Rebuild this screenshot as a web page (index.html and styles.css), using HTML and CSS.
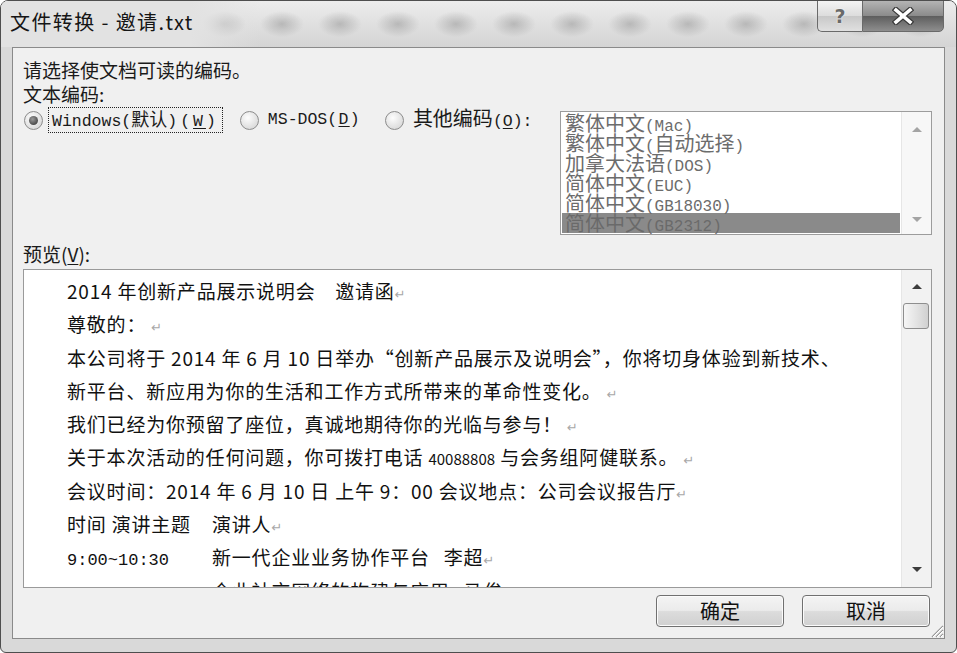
FILE: index.html
```html
<!DOCTYPE html>
<html lang="zh-CN">
<head>
  <meta charset="UTF-8" />
  <meta name="viewport" content="width=device-width, initial-scale=1.0"/>
  <title>文件转换 - 邀请.txt</title>
  <link rel="stylesheet" href="styles.css">
</head>
<body>
  <div class="window">
    <div class="titlebar">
      <div class="title">文件转换 - 邀请.txt</div>
      <div class="caption-buttons">
        <div class="cap-btn help">?</div>
        <div class="cap-btn close">
          <svg width="22" height="18" viewBox="0 0 22 18">
            <path d="M4 3 L18 15 M18 3 L4 15" stroke="#3a3a3a" stroke-width="6" stroke-linecap="square"/>
            <path d="M4 3 L18 15 M18 3 L4 15" stroke="#fff" stroke-width="3.6" stroke-linecap="square"/>
          </svg>
        </div>
      </div>
    </div>

    <div class="client">
      <p class="line">请选择使文档可读的编码。</p>
      <p class="line">文本编码:</p>

      <div class="encoding-row">
        <div class="radios">
          <div class="radio checked">
            <span class="circle"></span>
            <span class="radio-text focus">Windows(<span class="cjk-s">默认</span>)<span class="acc">(<u>W</u>)</span></span>
          </div>
          <div class="radio">
            <span class="circle"></span>
            <span class="radio-text">MS-DOS<span class="acc-s">(<u>D</u>)</span></span>
          </div>
          <div class="radio other">
            <span class="circle"></span>
            <span class="radio-text"><span class="cjk">其他编码</span>(<u>O</u>):</span>
          </div>
        </div>

        <div class="listbox">
          <ul class="list-items">
            <li>繁体中文<span class="lat">(Mac)</span></li>
            <li>繁体中文<span class="lat">(</span>自动选择<span class="lat">)</span></li>
            <li>加拿大法语<span class="lat">(DOS)</span></li>
            <li>简体中文<span class="lat">(EUC)</span></li>
            <li>简体中文<span class="lat">(GB18030)</span></li>
            <li class="selected">简体中文<span class="lat">(GB2312)</span></li>
          </ul>
          <div class="scrollbar list-sb">
            <div class="sb-btn"><span class="arrow up"></span></div>
            <div class="sb-btn"><span class="arrow down"></span></div>
          </div>
        </div>
      </div>

      <p class="line preview-label">预览(<u>V</u>):</p>

      <div class="preview">
        <div class="doc">
          <div class="row">2014 年创新产品展示说明会　邀请函<span class="mark">↵</span></div>
          <div class="row">尊敬的： <span class="mark">↵</span></div>
          <div class="row">本公司将于 2014 年 6 月 10 日举办“创新产品展示及说明会”，你将切身体验到新技术、</div>
          <div class="row">新平台、新应用为你的生活和工作方式所带来的革命性变化。 <span class="mark">↵</span></div>
          <div class="row">我们已经为你预留了座位，真诚地期待你的光临与参与！ <span class="mark">↵</span></div>
          <div class="row">关于本次活动的任何问题，你可拨打电话 <span class="small">40088808</span> 与会务组阿健联系。 <span class="mark">↵</span></div>
          <div class="row">会议时间：2014 年 6 月 10 日 上午 9：00 会议地点：公司会议报告厅<span class="mark">↵</span></div>
          <div class="row"><span class="col">时间 演讲主题</span>演讲人<span class="mark">↵</span></div>
          <div class="row"><span class="col time">9:00~10:30</span>新一代企业业务协作平台<span class="name">李超</span><span class="mark">↵</span></div>
          <div class="row"><span class="col time">10:30~12:00</span>企业社交网络的构建与应用<span class="name">马俊</span><span class="mark">↵</span></div>
        </div>
        <div class="scrollbar doc-sb">
          <div class="sb-btn top"><span class="arrow up"></span></div>
          <div class="thumb"></div>
          <div class="sb-track"></div>
          <div class="sb-btn bottom"><span class="arrow down"></span></div>
        </div>
      </div>

      <div class="actions">
        <button class="btn">确定</button>
        <button class="btn">取消</button>
      </div>

      <svg class="grip" width="14" height="14" viewBox="0 0 14 14">
        <path d="M13 2 L2 13 M13 6 L6 13 M13 10 L10 13" stroke="#9a9a9a" stroke-width="1.4"/>
        <path d="M13 3 L3 13 M13 7 L7 13 M13 11 L11 13" stroke="#fff" stroke-width="1"/>
      </svg>
    </div>
  </div>
</body>
</html>
```

FILE: styles.css
```css
* {
  box-sizing: border-box;
}

body {
  margin: 0;
  font-family: "Noto Sans CJK SC", sans-serif;
  color: #1a1a1a;
  background: #fff;
}

p {
  margin: 0;
}

u {
  text-decoration: underline;
  text-underline-offset: 2px;
}

.window {
  width: 957px;
  height: 653px;
  border: 1px solid #4e4e4e;
  border-radius: 8px 8px 6px 6px;
  background: #d9d9d9;
  overflow: hidden;
}

/* title bar with the blurred glass look */
.titlebar {
  height: 46px;
  display: flex;
  align-items: flex-start;
  padding: 0 12px 0 9px;
  background:
    linear-gradient(to right, #e2e2e2 0, #e2e2e2 190px, rgba(226,226,226,0) 260px),
    radial-gradient(22px 13px at 50% 50%, rgba(110,110,110,0.35), rgba(110,110,110,0)) 20px 6px / 58px 34px repeat-x,
    linear-gradient(#ececec, #d4d4d4);
}

.title {
  margin-top: 9px;
  font-size: 20px;
  line-height: 24px;
  letter-spacing: 1.4px;
  color: #151515;
}

.caption-buttons {
  margin-left: auto;
  display: flex;
  margin-top: -1px;
}

.cap-btn {
  height: 32px;
  display: flex;
  align-items: center;
  justify-content: center;
  border: 1px solid #6a6a6a;
}

.help {
  width: 45px;
  border-right: none;
  border-radius: 0 0 0 5px;
  background: linear-gradient(#f4f4f4, #dcdcdc 50%, #c8c8c8 51%, #e0e0e0);
  font-family: "DejaVu Sans", sans-serif;
  font-weight: bold;
  font-size: 19px;
  color: #6a6a6a;
  text-shadow: 0 0 2px #fff;
}

.close {
  width: 82px;
  border-radius: 0 0 5px 0;
  background: linear-gradient(#b4b4b4, #8a8a8a 50%, #5e5e5e 51%, #8e8e8e);
}

/* client area */
.client {
  position: relative;
  height: 592px;
  margin: 0 11px;
  padding: 10px 12px 0 10px;
  border: 1px solid #8a8a8a;
  background: #f0f0f0;
}

.line {
  font-size: 19px;
  line-height: 24px;
}

.encoding-row {
  display: flex;
  align-items: flex-start;
}

.radios {
  display: flex;
  align-items: center;
  height: 24px;
  margin-top: 2px;
  gap: 18px;
  padding-left: 1px;
}

.radio {
  display: flex;
  align-items: center;
  gap: 6px;
}

.radio.other {
  margin-left: 3px;
}

.circle {
  width: 19px;
  height: 19px;
  border-radius: 50%;
  border: 1px solid #8c8c8c;
  background: radial-gradient(circle at 40% 35%, #fdfdfd, #d0d0d0);
  display: flex;
  align-items: center;
  justify-content: center;
}

.checked .circle::after {
  content: "";
  width: 9px;
  height: 9px;
  border-radius: 50%;
  background: radial-gradient(circle at 40% 35%, #9a9a9a, #2c2c2c);
}

.radio-text {
  font-family: "Liberation Mono", "Noto Sans CJK SC", monospace;
  font-size: 16.5px;
  line-height: 20px;
  padding: 0 3px;
  color: #1a1a1a;
}

.radio-text .cjk {
  font-family: "Noto Sans CJK SC", sans-serif;
  font-size: 20px;
}

.radio-text .cjk-s {
  font-family: "Noto Sans CJK SC", sans-serif;
  font-size: 18px;
}

.radio-text .acc {
  letter-spacing: 3px;
  padding-left: 3px;
}

.radio-text .acc-s {
  letter-spacing: 1.3px;
}

.focus {
  outline: 1px dotted #222;
  outline-offset: 0;
}

.listbox {
  margin-left: auto;
  margin-top: 5px;
  width: 372px;
  height: 124px;
  border: 1px solid #9c9c9c;
  background: #fff;
  display: flex;
}

.list-items {
  flex: 1;
  margin: 0;
  padding: 1px 1px 0 1px;
  list-style: none;
  overflow: hidden;
}

.list-items li {
  height: 20px;
  line-height: 20px;
  font-size: 20px;
  padding-left: 3px;
  color: #6c6c6c;
  white-space: nowrap;
}

.list-items .lat {
  font-family: "Liberation Mono", monospace;
  font-size: 16px;
}

.list-items .selected {
  background: #8a8a8a;
  color: #6a6a6a;
}

.scrollbar {
  width: 30px;
  display: flex;
  flex-direction: column;
  background: #f2f2f2;
  border-left: 1px solid #e6e6e6;
}

.list-sb {
  justify-content: space-between;
  padding: 8px 0 6px;
  background: #f7f7f7;
}

.sb-btn {
  height: 18px;
  display: flex;
  align-items: center;
  justify-content: center;
}

.arrow {
  width: 0;
  height: 0;
  border-left: 5px solid transparent;
  border-right: 5px solid transparent;
}

.arrow.up {
  border-bottom: 5px solid #3c3c3c;
}

.arrow.down {
  border-top: 5px solid #3c3c3c;
}

.list-sb .arrow.up {
  border-bottom-color: #a4a4a4;
}

.list-sb .arrow.down {
  border-top-color: #a4a4a4;
}

.preview-label {
  margin-top: 7px;
}

.preview {
  margin-top: 3px;
  height: 319px;
  border: 1px solid #9a9a9a;
  background: #fff;
  display: flex;
}

.doc {
  flex: 1;
  overflow: hidden;
  padding: 4px 0 0 43px;
  font-size: 19px;
  letter-spacing: 0.8px;
  color: #111;
}

.doc .row {
  height: 33.3px;
  line-height: 33.3px;
  white-space: pre;
}

.doc .mark {
  font-family: "DejaVu Sans", sans-serif;
  font-size: 13px;
  color: #a8a8a8;
}

.doc .small {
  font-size: 15px;
  letter-spacing: 0;
}

.doc .col {
  display: inline-block;
  width: 145px;
}

.doc .time {
  font-family: "Liberation Mono", monospace;
  font-size: 17px;
  letter-spacing: 0;
}

.doc .name {
  margin-left: 14px;
}

.doc-sb .top {
  height: 33px;
}

.doc-sb .bottom {
  height: 36px;
}

.thumb {
  height: 26px;
  margin: 0 2px 0 1px;
  border: 1px solid #8e8e8e;
  border-radius: 3px;
  background: linear-gradient(to right, #f6f6f6, #e2e2e2 55%, #d0d0d0);
}

.sb-track {
  flex: 1;
}

.actions {
  display: flex;
  justify-content: flex-end;
  gap: 18px;
  margin-top: 7px;
  padding-right: 2px;
}

.btn {
  width: 128px;
  height: 32px;
  padding: 0;
  border: 1px solid #707070;
  border-radius: 4px;
  background: linear-gradient(#f4f4f4, #ebebeb 48%, #dcdcdc 52%, #d0d0d0);
  box-shadow: inset 0 0 0 1px #fbfbfb;
  font-family: "Noto Sans CJK SC", sans-serif;
  font-size: 20px;
  line-height: 28px;
  color: #111;
}

.grip {
  position: absolute;
  right: 0;
  bottom: 0;
}
```
